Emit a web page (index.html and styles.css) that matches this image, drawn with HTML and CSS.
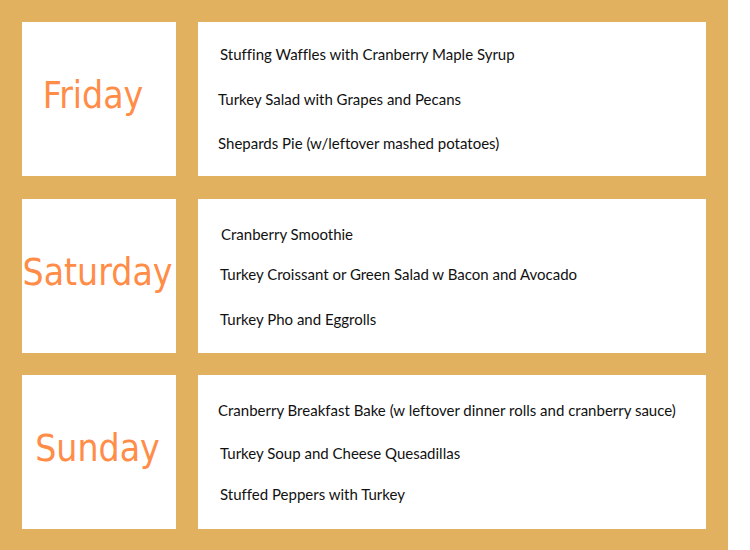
FILE: index.html
```html
<!DOCTYPE html>
<html>
<head>
<meta charset="utf-8">
<link rel="stylesheet" href="styles.css">
</head>
<body>
<div class="board">
  <div class="day day-fri">Friday</div>
  <ul class="menu menu-1">
    <li class="i-a">Stuffing Waffles with Cranberry Maple Syrup</li>
    <li class="i-b">Turkey Salad with Grapes and Pecans</li>
    <li class="i-b">Shepards Pie (w/leftover mashed potatoes)</li>
  </ul>
  <div class="day">Saturday</div>
  <ul class="menu menu-2">
    <li class="i-c">Cranberry Smoothie</li>
    <li class="i-d">Turkey Croissant or Green Salad w Bacon and Avocado</li>
    <li class="i-e">Turkey Pho and Eggrolls</li>
  </ul>
  <div class="day">Sunday</div>
  <ul class="menu menu-3">
    <li class="i-f">Cranberry Breakfast Bake (w leftover dinner rolls and cranberry sauce)</li>
    <li class="i-g">Turkey Soup and Cheese Quesadillas</li>
    <li class="i-h">Stuffed Peppers with Turkey</li>
  </ul>
</div>
</body>
</html>
```
FILE: styles.css
```css
html, body {
  margin: 0;
  padding: 0;
  background: #ffffff;
}
.board {
  width: 728px;
  height: 550px;
  box-sizing: border-box;
  background: #e1b160;
  padding: 22px;
  display: grid;
  grid-template-columns: 154px 508px;
  grid-template-rows: 154px 154px 154px;
  column-gap: 22px;
  row-gap: 22.5px;
}
.day {
  background: #ffffff;
  display: flex;
  align-items: center;
  justify-content: center;
  padding: 0 3px 7px 0;
  box-sizing: border-box;
  color: #ff8c47;
  font-family: "DejaVu Sans Condensed", "DejaVu Sans", sans-serif;
  font-stretch: condensed;
  font-size: 37px;
  white-space: nowrap;
}
.day-fri { padding-right: 12px; }
.menu {
  background: #ffffff;
  margin: 0;
  padding: 0;
  list-style: none;
  font-family: Lato, sans-serif;
  font-size: 15px;
  line-height: 20px;
  color: #111111;
  font-variant-ligatures: none;
}
.menu li { display: block; }
.i-a { margin-top: 22px; padding-left: 22px; }
.i-b { margin-top: 24.5px; padding-left: 20px; }
.i-c { margin-top: 25px; padding-left: 23px; }
.i-d { margin-top: 20px; padding-left: 22px; }
.i-e { margin-top: 25px; padding-left: 22px; }
.i-f { margin-top: 25px; padding-left: 20px; }
.i-g { margin-top: 23px; padding-left: 22px; }
.i-h { margin-top: 21px; padding-left: 22px; }
```
